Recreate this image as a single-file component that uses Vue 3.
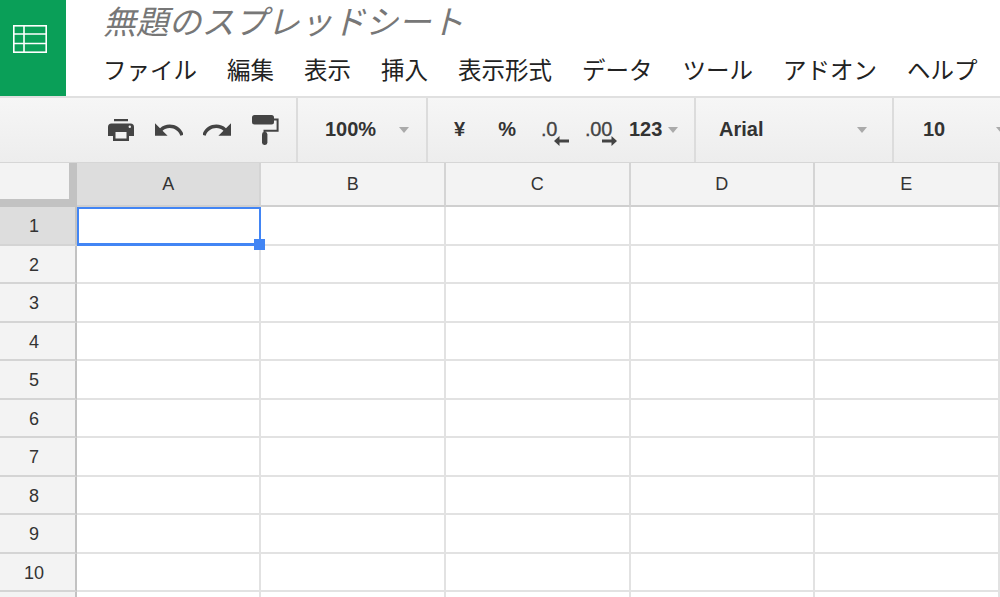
<template>
  <div class="app">
    <header class="top">
      <div class="logo">
        <svg width="34" height="28" viewBox="0 0 34 28" fill="none" stroke="#fff" stroke-width="1.6">
          <rect x="0.8" y="0.8" width="32.4" height="26.4" />
          <path d="M11 1v26M1 9h32M1 18.5h32" />
        </svg>
      </div>
      <div class="titles">
        <div class="doc-title">無題のスプレッドシート</div>
        <nav class="menu">
          <span v-for="m in menus" :key="m">{{ m }}</span>
        </nav>
      </div>
    </header>

    <div class="toolbar">
      <div class="group g-icons">
        <svg class="ic-print" width="26" height="22" viewBox="0 0 26 22">
          <path fill="#444" d="M6 0h14v2.2H6zM3.5 4.5h19A3.5 3.5 0 0 1 26 8v9h-5v5H5v-5H0V8a3.5 3.5 0 0 1 3.5-3.5z" />
          <rect x="7.5" y="13" width="11" height="6.5" fill="#f2f2f2" />
          <circle cx="21.8" cy="7.8" r="1.2" fill="#f2f2f2" />
        </svg>
        <svg class="ic-undo" width="28" height="13" viewBox="2 7 20 9">
          <path fill="#444" d="M12.5 8c-2.65 0-5.05.99-6.9 2.6L2 7v9h9l-3.62-3.62c1.39-1.16 3.16-1.88 5.12-1.88 3.54 0 6.55 2.31 7.6 5.5l2.37-.78C21.08 11.03 17.15 8 12.5 8z" />
        </svg>
        <svg class="ic-redo" width="28" height="13" viewBox="2 7 20 9">
          <path fill="#444" d="M18.4 10.6C16.55 8.99 14.15 8 11.5 8c-4.65 0-8.58 3.03-9.96 7.22L3.9 16c1.05-3.19 4.05-5.5 7.6-5.5 1.95 0 3.73.72 5.12 1.88L13 16h9V7l-3.6 3.6z" />
        </svg>
        <svg class="ic-roller" width="27" height="30" viewBox="0 0 27 30">
          <rect x="0" y="0" width="22" height="9.5" rx="2.5" fill="#444" />
          <path d="M22 4.5h3.6v11.2H12.5v3" fill="none" stroke="#444" stroke-width="2" />
          <rect x="10" y="17" width="5.4" height="13" rx="2.4" fill="#444" />
        </svg>
      </div>
      <div class="group g-zoom">
        <span class="val">100%</span>
        <i class="caret"></i>
      </div>
      <div class="group g-format">
        <span class="val yen">¥</span>
        <span class="val pct">%</span>
        <span class="dec dec-less">.0
          <svg class="arrow" width="15" height="10" viewBox="0 0 15 10">
            <path fill="#444" d="M0 5l5.5-5V3.5H15v3H5.5V10z" />
          </svg>
        </span>
        <span class="dec dec-more">.00
          <svg class="arrow" width="15" height="10" viewBox="0 0 15 10">
            <path fill="#444" d="M15 5L9.5 0V3.5H0v3h9.5V10z" />
          </svg>
        </span>
        <span class="val num">123</span>
        <i class="caret"></i>
      </div>
      <div class="group g-font">
        <span class="val">Arial</span>
        <i class="caret"></i>
      </div>
      <div class="group g-size">
        <span class="val">10</span>
        <i class="caret"></i>
      </div>
    </div>

    <div class="sheet">
      <div class="corner"></div>
      <div v-for="c in cols" :key="c" class="col-head" :class="{ on: c === 'A' }">{{ c }}</div>
      <template v-for="r in rows" :key="r">
        <div class="row-head" :class="{ on: r === 1 }">{{ r < 11 ? r : '' }}</div>
        <div v-for="c in cols" :key="c + r" class="cell">
          <div v-if="r === 1 && c === 'A'" class="selection"><b class="handle"></b></div>
        </div>
      </template>
    </div>
  </div>
</template>

<script setup>
const menus = ['ファイル', '編集', '表示', '挿入', '表示形式', 'データ', 'ツール', 'アドオン', 'ヘルプ']
const cols = ['A', 'B', 'C', 'D', 'E']
const rows = [1, 2, 3, 4, 5, 6, 7, 8, 9, 10, 11]
</script>

<style>
html,
body {
  margin: 0;
  overflow: hidden;
  background: #fff;
}
</style>

<style scoped>
.app {
  width: 1000px;
  height: 597px;
  overflow: hidden;
  font-family: "Liberation Sans", Arial, sans-serif;
  color: #333;
}

.top {
  display: flex;
  height: 96px;
}

.logo {
  width: 66px;
  background: #0a9f58;
  display: flex;
  align-items: center;
  justify-content: center;
  padding-bottom: 18px;
  padding-right: 6px;
  box-sizing: border-box;
  flex: none;
}

.titles {
  padding-left: 37px;
  font-family: "Noto Sans CJK JP", "Liberation Sans", sans-serif;
}

.doc-title {
  font-size: 32.8px;
  line-height: 40px;
  font-style: italic;
  color: #777;
  white-space: nowrap;
}

.menu {
  display: flex;
  gap: 30px;
  margin-top: 12px;
  font-size: 23.5px;
  line-height: 34px;
  color: #222;
  white-space: nowrap;
}

.toolbar {
  display: flex;
  height: 64px;
  border-top: 2px solid #e0e0e0;
  border-bottom: 2px solid #d6d6d6;
  background: linear-gradient(#f6f6f6, #ededed);
  margin-bottom: -1px;
}

.group {
  display: flex;
  align-items: center;
  box-sizing: border-box;
  border-right: 2px solid #dcdcdc;
  flex: none;
  position: relative;
  padding-bottom: 2px;
}

.val {
  font-size: 20px;
  font-weight: 700;
  color: #333;
}

.caret {
  width: 0;
  height: 0;
  margin-top: 2px;
  border-left: 5.5px solid transparent;
  border-right: 5.5px solid transparent;
  border-top: 6px solid #aaa;
}

.g-icons {
  width: 298px;
  padding-left: 108px;
  padding-bottom: 0;
}

.ic-print {
  margin-top: -1px;
}

.ic-undo {
  margin-left: 21px;
  margin-top: -1px;
}

.ic-redo {
  margin-left: 20px;
  margin-top: -1px;
}

.ic-roller {
  margin-left: 21px;
  margin-top: -1px;
}

.g-icons svg {
  flex: none;
}

.g-zoom {
  width: 130px;
  padding-left: 27px;
}

.g-zoom .caret {
  margin-left: 23px;
}

.g-format {
  width: 268px;
}

.yen {
  margin-left: 26px;
}

.pct {
  margin-left: 33px;
}

.dec {
  position: relative;
  font-size: 20px;
  color: #444;
  font-weight: 400;
  letter-spacing: -0.2px;
  -webkit-text-stroke: 0.3px #444;
}

.dec-less {
  margin-left: 25px;
  width: 44px;
}

.dec-more {
  width: 44px;
}

.dec .arrow {
  position: absolute;
  top: 18px;
}

.dec-less .arrow {
  left: 13px;
}

.dec-more .arrow {
  left: 17px;
}

.g-format .caret {
  margin-left: 6px;
}

.g-font {
  width: 198px;
  padding-left: 23px;
}

.g-font .caret {
  margin-left: 94px;
}

.g-size {
  width: 140px;
  padding-left: 29px;
  border-right: 0;
}

.g-size .caret {
  margin-left: 51px;
}

.sheet {
  display: grid;
  grid-template-columns: 76.9px repeat(5, 184.55px);
  grid-template-rows: 44px repeat(11, 38.5px);
}

.corner {
  background: #f3f3f3;
  border-right: 8px solid #c2c2c2;
  border-bottom: 8px solid #c2c2c2;
  box-sizing: border-box;
}

.col-head,
.row-head {
  display: flex;
  align-items: center;
  justify-content: center;
  background: #f3f3f3;
  font-size: 18px;
  color: #333;
  box-sizing: border-box;
}

.col-head {
  border-right: 2px solid #d4d4d4;
  border-bottom: 2px solid #cfcfcf;
}

.row-head {
  padding-top: 3px;
  padding-right: 7px;
  border-right: 2px solid #c2c2c2;
  border-bottom: 2px solid #d4d4d4;
}

.col-head.on,
.row-head.on {
  background: #dddddd;
}

.cell {
  position: relative;
  box-sizing: border-box;
  border-right: 2px solid #e2e2e2;
  border-bottom: 2px solid #e2e2e2;
}

.selection {
  position: absolute;
  z-index: 2;
  left: 0;
  top: 0;
  width: 184px;
  height: 39px;
  box-sizing: border-box;
  border: 2px solid #4285f4;
  border-bottom-width: 3px;
}

.handle {
  position: absolute;
  right: -6px;
  bottom: -7px;
  width: 11px;
  height: 11px;
  background: #4285f4;
}
</style>
